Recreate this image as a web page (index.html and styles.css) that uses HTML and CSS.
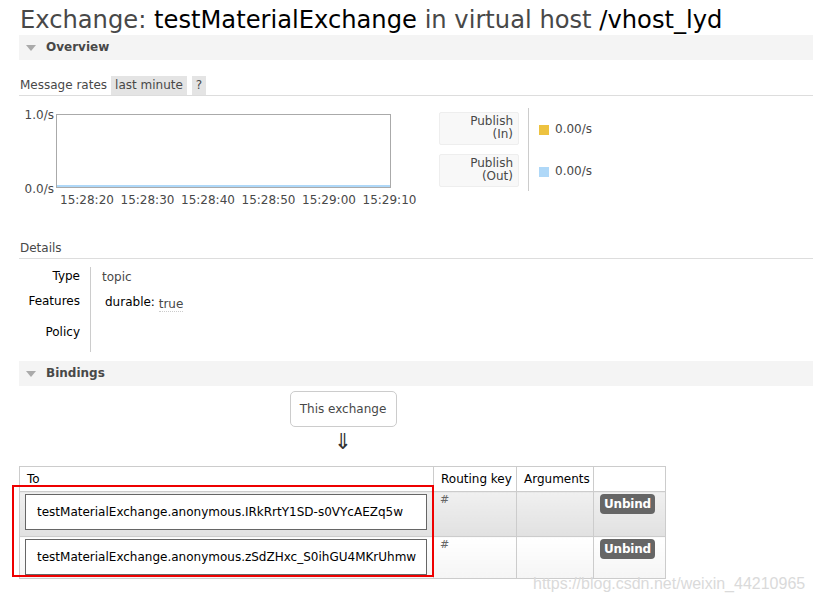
FILE: index.html
```html
<!DOCTYPE html>
<html>
<head>
<meta charset="utf-8">
<link rel="stylesheet" href="styles.css">
</head>
<body>
<div class="page">
  <h1 class="title">Exchange: <b>testMaterialExchange</b> in virtual host <b>/vhost_lyd</b></h1>

  <div class="section-head"><span class="tri"></span>Overview</div>
  <div class="section-body">
    <div class="rates-bar">
      <span>Message rates</span>
      <span class="pill">last minute</span>
      <span class="pill q">?</span>
    </div>
    <div class="chart-row">
      <div class="chart">
        <div class="chart-main">
          <div class="ylabels"><span>1.0/s</span><span>0.0/s</span></div>
          <div class="plot"><div class="plot-line"></div></div>
        </div>
        <div class="xlabels">
          <span>15:28:20</span><span>15:28:30</span><span>15:28:40</span><span>15:28:50</span><span>15:29:00</span><span>15:29:10</span>
        </div>
      </div>
      <div class="legend">
        <div class="legend-labels">
          <div class="legend-box">Publish<br>(In)</div>
          <div class="legend-box">Publish<br>(Out)</div>
        </div>
        <div class="legend-values">
          <div class="legend-val"><span class="sw yellow"></span>0.00/s</div>
          <div class="legend-val"><span class="sw blue"></span>0.00/s</div>
        </div>
      </div>
    </div>

    <div class="details-head">Details</div>
    <div class="details">
      <div class="dl">Type</div><div class="dv">topic</div>
      <div class="dl">Features</div><div class="dv feat">durable: <span class="u">true</span></div>
      <div class="dl pol">Policy</div><div class="dv pol"></div>
    </div>
  </div>

  <div class="section-head"><span class="tri"></span>Bindings</div>
  <div class="bindings">
    <div class="bind-wrap">
      <div class="this-ex">This exchange</div>
      <div class="arrow">⇓</div>
      <table class="btable">
        <colgroup><col class="c-to"><col class="c-rk"><col class="c-arg"><col class="c-act"></colgroup>
        <thead>
          <tr><th>To</th><th>Routing key</th><th>Arguments</th><th></th></tr>
        </thead>
        <tbody>
          <tr class="r1">
            <td><div class="qbox">testMaterialExchange.anonymous.IRkRrtY1SD-s0VYcAEZq5w</div></td>
            <td class="rk">#</td><td></td>
            <td><span class="btn">Unbind</span></td>
          </tr>
          <tr class="r2">
            <td><div class="qbox">testMaterialExchange.anonymous.zSdZHxc_S0ihGU4MKrUhmw</div></td>
            <td class="rk">#</td><td></td>
            <td><span class="btn">Unbind</span></td>
          </tr>
        </tbody>
      </table>
      <div class="redmark"></div>
    </div>
  </div>
</div>
<div class="watermark">https://blog.csdn.net/weixin_44210965</div>
</body>
</html>
```
FILE: styles.css
```css
html, body { margin: 0; padding: 0; background: #fff; }
body {
  font-family: "DejaVu Sans", Verdana, sans-serif;
  font-size: 12px;
  color: #484848;
  width: 813px;
  height: 605px;
  overflow: hidden;
  position: relative;
}
.page { padding-left: 19px; }
.title {
  margin: 0;
  padding: 5px 0 0 1px;
  height: 30px;
  font-size: 24.2px;
  line-height: 30px;
  font-weight: normal;
  color: #484848;
  white-space: nowrap;
}
.title b { font-weight: normal; color: #000; }

.section-head {
  height: 25px;
  line-height: 25px;
  background: #f4f4f4;
  font-weight: bold;
  color: #484848;
  font-size: 12px;
  display: flex;
  align-items: center;
}
.tri {
  width: 0; height: 0;
  border-left: 5px solid transparent;
  border-right: 5px solid transparent;
  border-top: 6px solid #aaa;
  margin: 0 10px 0 7px;
}
.section-body { padding-top: 16px; }

.rates-bar {
  display: flex;
  align-items: center;
  height: 19px;
  border-bottom: 1px solid #ddd;
  padding-left: 1px;
}
.rates-bar span { line-height: 19px; }
.pill { background: #e4e4e4; padding: 0 4px; margin-left: 4px; }
.pill.q { margin-left: 5px; padding: 0 4px; }

.chart-row { display: flex; padding-top: 12px; height: 105px; }
.chart { width: 401px; }
.chart-main { display: flex; height: 74px; margin-top: 6px; }
.ylabels {
  width: 37px;
  display: flex;
  flex-direction: column;
  justify-content: space-between;
  text-align: right;
  padding-right: 2px;
  box-sizing: border-box;
  margin-top: -6px;
  margin-bottom: -8px;
  color: #484848;
}
.plot {
  width: 335px;
  height: 74px;
  border: 1px solid #aaa;
  box-sizing: border-box;
  display: flex;
  align-items: flex-end;
}
.plot-line { height: 2px; width: 100%; background: #afd8f8; }
.xlabels { display: flex; padding-left: 41px; margin-top: 5px; white-space: nowrap; }
.xlabels span { width: 60.5px; flex: none; }

.legend { display: flex; margin-left: 19px; }
.legend-labels {
  width: 90px;
  border-right: 1px solid #ccc;
  padding-top: 4px;
  display: flex;
  flex-direction: column;
  gap: 9px;
  height: 83px;
  box-sizing: border-box;
}
.legend-box {
  width: 80px;
  height: 33px;
  box-sizing: border-box;
  background: #f8f8f8;
  border: 1px solid #eee;
  border-radius: 2px;
  text-align: right;
  padding: 2px 5px 0 0;
  line-height: 13px;
  color: #484848;
}
.legend-values { padding-left: 10px; padding-top: 14px; display: flex; flex-direction: column; gap: 27px; }
.legend-val { display: flex; align-items: center; line-height: 15px; }
.sw { width: 10px; height: 10px; margin-right: 6px; display: inline-block; }
.yellow { background: #edc240; }
.blue { background: #afd8f8; }

.details-head {
  margin-top: 25px;
  padding-left: 1px;
  height: 20px;
  line-height: 20px;
  border-bottom: 1px solid #ddd;
}
.details {
  display: grid;
  grid-template-columns: 72px auto;
  margin-top: 8px;
  padding-bottom: 9px;
}
.dl {
  text-align: right;
  color: #000;
  padding-right: 10px;
  border-right: 1px solid #ccc;
  height: 24px;
  line-height: 16px;
  padding-top: 1px;
}
.dv { padding-left: 11px; color: #484848; line-height: 16px; padding-top: 2px; }
.dv.feat { padding-left: 14px; color: #000; }
.u { color: #484848; border-bottom: 1px dotted #ccc; position: relative; top: 2px; }
.dl.pol { height: 28px; padding-top: 7px; }

.bindings { padding-top: 5px; }
.bind-wrap { width: 646px; position: relative; }
.this-ex {
  width: 107px;
  height: 36px;
  box-sizing: border-box;
  margin: 0 auto;
  border: 1px solid #ccc;
  border-radius: 5px;
  text-align: center;
  line-height: 34px;
  color: #484848;
  position: relative;
  left: 1px;
}
.arrow {
  text-align: center;
  font-size: 22px;
  line-height: 30px;
  height: 39px;
  color: #333;
  position: relative;
  left: 1px;
}
.btable {
  border-collapse: collapse;
  border: 1px solid #ccc;
  width: 646px;
  table-layout: fixed;
  font-size: 12px;
}
.c-to { width: 414px; }
.c-rk { width: 83px; }
.c-arg { width: 77px; }
.c-act { width: 72px; }
.btable th {
  font-weight: normal;
  color: #000;
  text-align: left;
  height: 23px;
  padding: 1px 4px 0 7px;
  border: 1px solid #ccc;
  vertical-align: top;
  line-height: 22px;
  white-space: nowrap;
  overflow: hidden;
}
.btable td {
  border: 1px solid #ccc;
  vertical-align: top;
  padding: 2px 6px 0 6px;
}
.r1 td { height: 42px; background: linear-gradient(#f0f0f0, #e1e1e1); }
.r2 td { height: 39px; background: linear-gradient(#ffffff, #f5f5f5); }
.btable td:first-child { padding-left: 5px; }
.qbox {
  width: 402px;
  height: 36px;
  box-sizing: border-box;
  border: 1px solid #666;
  background: #fff;
  color: #000;
  padding-left: 11px;
  line-height: 34px;
  white-space: nowrap;
}
.rk { color: #666; font-size: 11px; padding-top: 1px !important; }
.btn {
  display: inline-block;
  background: #666;
  color: #fff;
  font-weight: bold;
  font-size: 12px;
  letter-spacing: -0.2px;
  border-radius: 4px;
  padding: 0 4px;
  height: 20px;
  line-height: 20px;
}
.redmark {
  position: absolute;
  left: -7px;
  top: 94px;
  width: 418px;
  height: 88px;
  border: 2px solid #e00;
  pointer-events: none;
}
.watermark {
  position: absolute;
  left: 533px;
  top: 575px;
  font-family: "Liberation Sans", Arial, sans-serif;
  font-size: 16px;
  color: #dadada;
  white-space: nowrap;
}
```
